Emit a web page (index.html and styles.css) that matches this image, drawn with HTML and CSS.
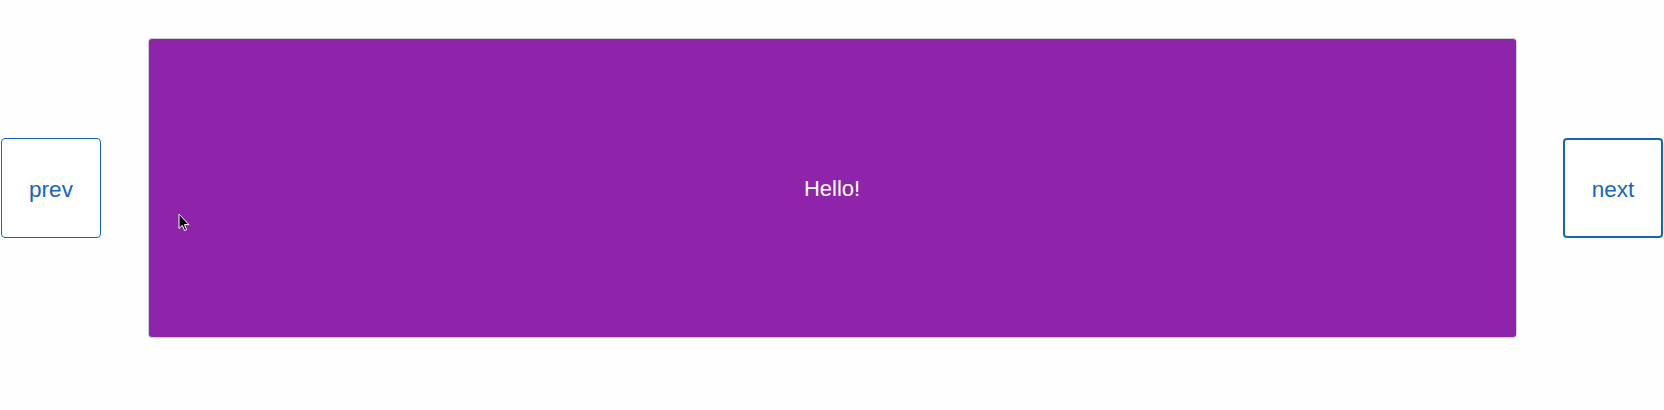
FILE: index.html
```html
<!DOCTYPE html>
<html lang="en">
<head>
<meta charset="utf-8">
<title>Carousel</title>
<link rel="stylesheet" href="styles.css">
</head>
<body>
<div class="carousel">
  <button class="nav prev" type="button">prev</button>
  <div class="slide">Hello!</div>
  <button class="nav next" type="button">next</button>
</div>
<svg class="cursor" width="12" height="19" viewBox="0 0 12 19" aria-hidden="true">
  <path d="M1 1 L1 15.5 L4.3 12.4 L6.6 17.6 L8.6 16.7 L6.4 11.6 L10.9 11.6 Z" fill="#000" stroke="#fff" stroke-width="1" stroke-linejoin="round"/>
</svg>
</body>
</html>
```
FILE: styles.css
```css
html, body {
  margin: 0;
  padding: 0;
  background: #fefefe;
  width: 1664px;
  height: 410px;
  overflow: hidden;
  font-family: "Liberation Sans", Arial, sans-serif;
}

.carousel {
  display: flex;
  align-items: center;
  justify-content: space-between;
  padding: 39px 1px 0 1px;
}

.nav {
  box-sizing: border-box;
  width: 100px;
  height: 100px;
  background: #ffffff;
  border: 1px solid #1565c0;
  border-radius: 4px;
  color: #1565c0;
  font-family: "Liberation Sans", Arial, sans-serif;
  font-size: 22.5px;
  padding: 3px 0 0 0;
  margin: 0;
  display: flex;
  align-items: center;
  justify-content: center;
}

.next {
  border-width: 2px;
}

.slide {
  box-sizing: border-box;
  width: 1367px;
  height: 298px;
  padding-top: 2px;
  background: #8e24aa;
  border-radius: 3px;
  box-shadow: 0 0 0 1px rgba(0, 0, 0, 0.18);
  color: #ffffff;
  font-size: 22px;
  display: flex;
  align-items: center;
  justify-content: center;
}

.cursor {
  position: absolute;
  left: 178px;
  top: 213px;
}
```
